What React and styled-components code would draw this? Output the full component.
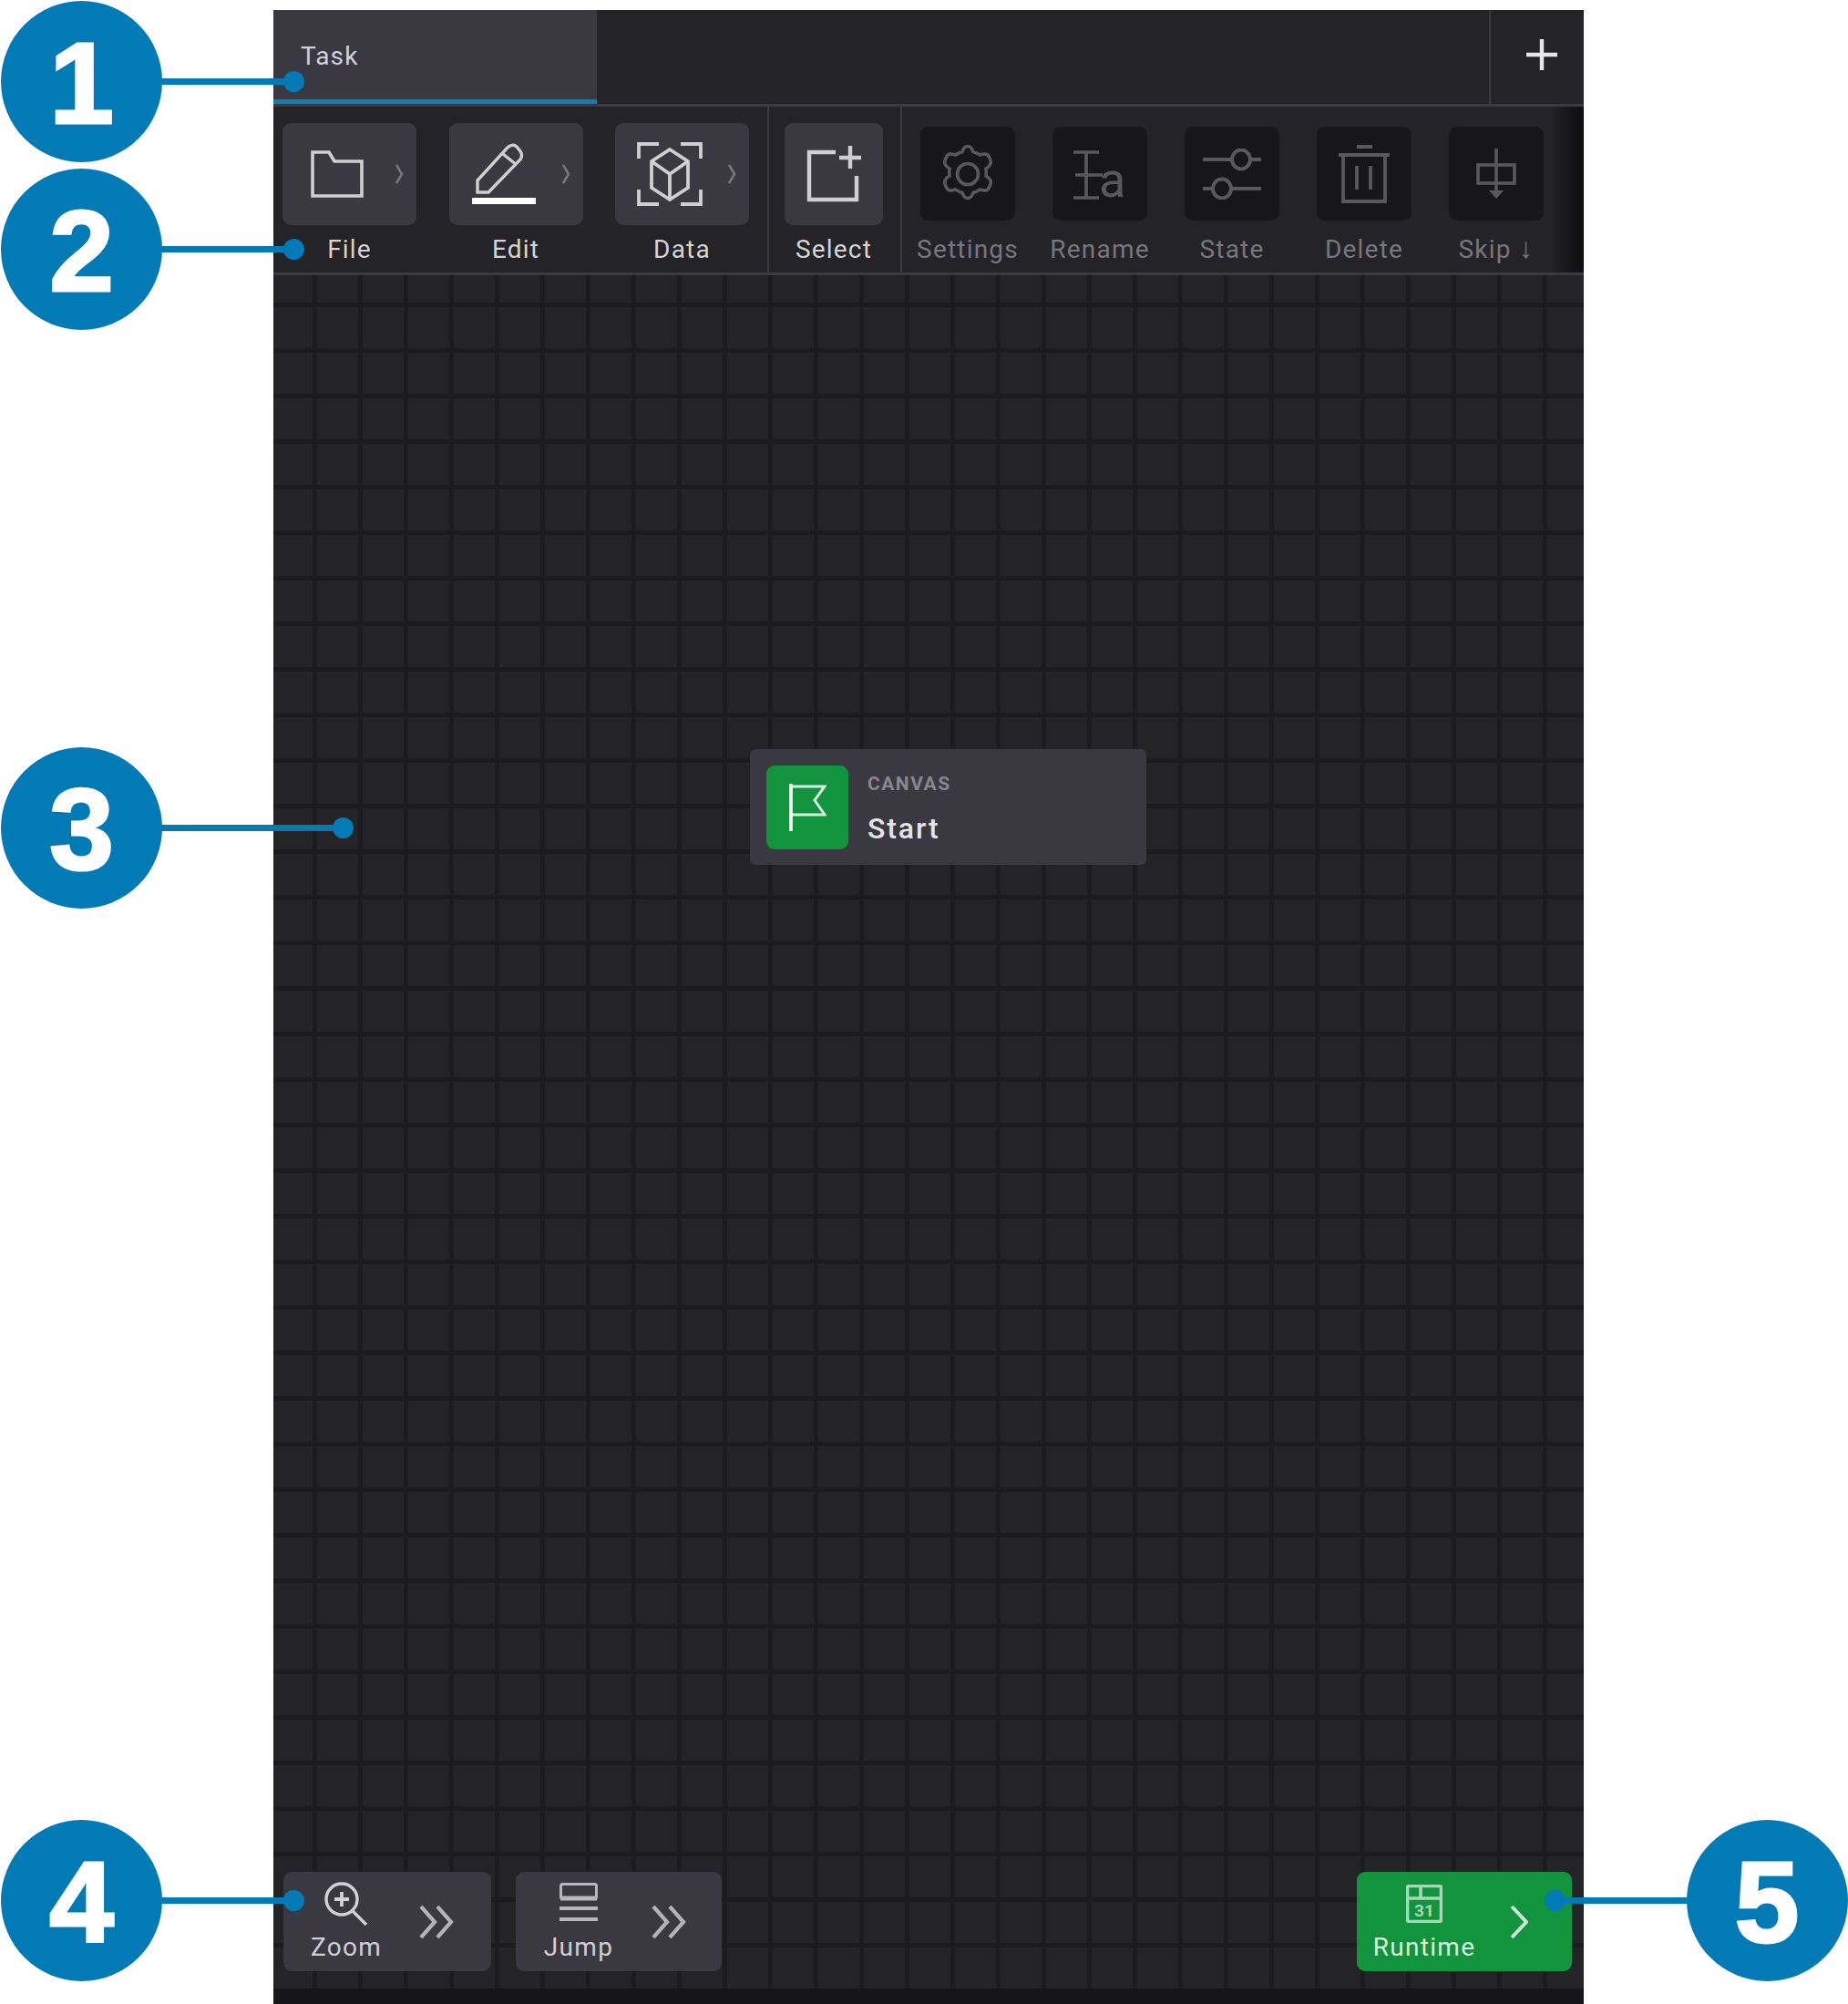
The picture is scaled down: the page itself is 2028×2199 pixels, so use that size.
import React from "react";
import styled, { createGlobalStyle } from "styled-components";

const Global = createGlobalStyle`
  html, body { margin: 0; padding: 0; background: #fff; }
  * { box-sizing: border-box; }
`;

const FONT = `Roboto, "Liberation Sans", sans-serif`;

const Page = styled.div`
  position: relative;
  width: 2028px;
  height: 2199px;
  padding: 11px 290px 0 300px;
  overflow: hidden;
  background: #fff;
  font-family: ${FONT};
`;
const Panel = styled.div`
  display: flex;
  flex-direction: column;
  height: 100%;
  background: #232328;
`;
const TabBar = styled.div`
  display: flex;
  height: 106px;
  flex: none;
  border-bottom: 3px solid #3a3a40;
`;
const Tab = styled.div`
  width: 355px;
  display: flex;
  align-items: flex-start;
  padding: 35px 0 0 30px;
  background: #3a3942;
  border-bottom: 5px solid #0f7fb3;
  color: #d2d2d6;
  font-size: 28px;
  letter-spacing: 1.1px;
  line-height: 32px;
`;
const TabFill = styled.div`
  flex: 1;
`;
const AddCell = styled.div`
  width: 104px;
  display: flex;
  align-items: center;
  justify-content: center;
  padding: 0 0 6px 10px;
  border-left: 2px solid #3a3a40;
`;
const Toolbar = styled.div`
  position: relative;
  display: flex;
  flex: none;
  height: 185px;
  border-bottom: 3px solid #3a3a40;
`;
const Group = styled.div`
  display: flex;
  width: ${(p) => p.$w};
  flex: ${(p) => (p.$w ? "none" : 1)};
  padding-left: ${(p) => p.$pad}px;
  gap: ${(p) => p.$gap || 0}px;
  border-right: ${(p) => (p.$w ? "2px solid #3a3a40" : "none")};
`;
const ToolItem = styled.div`
  display: flex;
  flex-direction: column;
  align-items: center;
  width: ${(p) => p.$w}px;
  padding-top: ${(p) => (p.$dim ? 22 : 18)}px;
`;
const ToolBtn = styled.div`
  display: flex;
  align-items: center;
  flex: none;
  width: 100%;
  height: ${(p) => (p.$dim ? 103 : 112)}px;
  border-radius: 9px;
  background: ${(p) => (p.$dim ? "#17171b" : "#3a3942")};
`;
const IconSlot = styled.div`
  display: flex;
  align-items: center;
  justify-content: center;
  flex: none;
  width: ${(p) => p.$w || "100%"};
`;
const ToolLabel = styled.div`
  margin-top: ${(p) => (p.$dim ? 16 : 11)}px;
  font-size: 28px;
  letter-spacing: 1.2px;
  line-height: 32px;
  white-space: nowrap;
  color: ${(p) => (p.$dim ? "#77777d" : "#d4d4d7")};
`;
const ArrowGlyph = styled.span`
  font-family: "Liberation Sans", sans-serif;
  font-weight: 700;
  font-size: 31px;
  line-height: 28px;
`;
const MoreChevron = styled.svg`
  margin-left: 4px;
  flex: none;
`;
const Fade = styled.div`
  position: absolute;
  right: 0;
  top: 0;
  bottom: 0;
  width: 36px;
  background: linear-gradient(to right, rgba(14, 14, 16, 0), #0e0e10);
`;
const Canvas = styled.div`
  position: relative;
  flex: 1;
  display: flex;
  align-items: flex-end;
  justify-content: space-between;
  padding: 0 13px 19px 11px;
  background-color: #232328;
  background-image: linear-gradient(to right, #1c1c1f 5px, transparent 5px),
    linear-gradient(to bottom, #1c1c1f 5px, transparent 5px);
  background-size: 50px 50px;
  background-position: 43px 0, 0 30px;
`;
const BottomStrip = styled.div`
  flex: none;
  height: 17px;
  background: #16161a;
`;
const Node = styled.div`
  position: absolute;
  left: 523px;
  top: 520px;
  width: 435px;
  height: 127px;
  display: flex;
  padding: 18px;
  gap: 21px;
  border-radius: 6px;
  background: #3a3942;
`;
const NodeIcon = styled.div`
  width: 90px;
  height: 92px;
  display: flex;
  align-items: center;
  justify-content: center;
  border-radius: 9px;
  background: #12933e;
`;
const NodeText = styled.div`
  display: flex;
  flex-direction: column;
`;
const NodeKind = styled.div`
  margin-top: 7px;
  font-size: 21px;
  line-height: 26px;
  font-weight: 700;
  letter-spacing: 1.5px;
  color: #87878d;
`;
const NodeName = styled.div`
  margin-top: 18px;
  font-size: 32px;
  line-height: 36px;
  font-weight: 500;
  letter-spacing: 1.9px;
  color: #e4e4e7;
`;
const BottomLeft = styled.div`
  display: flex;
  gap: 27px;
`;
const ActionBtn = styled.div`
  display: grid;
  grid-template-columns: ${(p) => p.$col}px 60px;
  align-items: center;
  width: ${(p) => p.$w}px;
  height: 109px;
  border-radius: 9px;
  background: ${(p) => (p.$green ? "#12933e" : "#3a3942")};
`;
const ActionMain = styled.div`
  display: flex;
  flex-direction: column;
  align-items: center;
  height: 100%;
  padding-top: 11px;
`;
const ActionIconBox = styled.div`
  display: flex;
  align-items: center;
  justify-content: center;
  height: 48px;
`;
const ActionLabel = styled.div`
  margin-top: 8px;
  font-size: 28px;
  letter-spacing: 1.3px;
  line-height: 32px;
  white-space: nowrap;
  color: ${(p) => (p.$green ? "#d6efdd" : "#cfcfd3")};
`;
const ActionArrow = styled.div`
  display: flex;
  justify-content: center;
`;

/* annotation overlays */
const Badge = styled.div`
  position: absolute;
  left: ${(p) => p.$cx - 88.5}px;
  top: ${(p) => p.$cy - 88.5}px;
  width: 177px;
  height: 177px;
  display: flex;
  align-items: center;
  justify-content: center;
  padding-top: 4px;
  border-radius: 50%;
  background: #017ab5;
  color: #fff;
  font-family: "Liberation Sans", Arial, sans-serif;
  font-weight: 700;
  font-size: 127px;
  line-height: 1;
  -webkit-text-stroke: 3px #fff;
`;
const Leader = styled.div`
  position: absolute;
  left: ${(p) => p.$x1}px;
  width: ${(p) => p.$x2 - p.$x1}px;
  top: ${(p) => p.$y - 3.5}px;
  height: 7px;
  background: #017ab5;
`;
const Dot = styled.div`
  position: absolute;
  left: ${(p) => p.$x - 11.5}px;
  top: ${(p) => p.$y - 11.5}px;
  width: 23px;
  height: 23px;
  border-radius: 50%;
  background: #017ab5;
`;

const Callout = ({ n, cy, dotX, right }) => (
  <>
    <Leader $x1={right ? dotX : 170} $x2={right ? 1860 : dotX} $y={cy} />
    <Dot $x={dotX} $y={cy} />
    <Badge $cx={right ? 1939 : 89.5} $cy={cy}>{n}</Badge>
  </>
);

/* icons */
const C = "#cfcfd2";
const D = "#58585d";

const Chevron = () => (
  <MoreChevron width="9" height="22" viewBox="0 0 9 22" fill="none" stroke="#77777c" strokeWidth="2.6">
    <path d="M1 1l6 10-6 10" />
  </MoreChevron>
);
const FolderIcon = () => (
  <svg width="58" height="52" viewBox="0 0 58 52" fill="none" stroke={C} strokeWidth="3.6">
    <path d="M2 50V2h18l6 10h30v38z" />
  </svg>
);
const PencilIcon = () => (
  <svg width="70" height="68" viewBox="0 0 70 68" fill="none" stroke={C} strokeWidth="3.4">
    <path d="M6 54V41L38 6c3-4 8-5 11-2l4 5c2 3 2 6 0 9L18 54z" />
    <path d="M34 12l15 12" />
    <path d="M0 63.500h70" stroke="#fff" strokeWidth="7" />
  </svg>
);
const CubeIcon = () => (
  <svg width="72" height="72" viewBox="0 0 72 72" fill="none" stroke={C} strokeWidth="3.8">
    <path d="M2 19V3h22M48 3h22v16M2 53v16h22M48 69h22V53" />
    <path d="M36 9l20 13v29L36 64 16 51V22z" />
    <path d="M16 22l20 14 20-14M36 36v28" />
  </svg>
);
const SelectIcon = () => (
  <svg width="60" height="62" viewBox="0 0 60 62" fill="none" stroke={C} strokeWidth="4.4">
    <path d="M32 7H3v52h52V33" />
    <path d="M48 0v25M36 13h24" />
  </svg>
);
const GearIcon = () => (
  <svg width="64" height="66" viewBox="0 0 64 64" fill="none" stroke={D} strokeWidth="3.6">
    <path d="M32 1.500c3 0 5 3 6 6 3 1 5 2 7.500 3.500 3-1 6-2 8.500 0 2 3 4 7 3 10-1 2-3 4-5 5 .5 3 .5 5 0 8 2 1 4 3 5 5 1 3-1 7-3 10-2.500 2-5.500 1-8.500 0-2.500 1.500-4.500 2.500-7.500 3.500-1 3-3 6-6 6s-5-3-6-6c-3-1-5-2-7.500-3.500-3 1-6 2-8.500 0-2-3-4-7-3-10 1-2 3-4 5-5-.5-3-.5-5 0-8-2-1-4-3-5-5-1-3 1-7 3-10 2.500-2 5.500-1 8.500 0 2.500-1.500 4.500-2.500 7.500-3.500 1-3 3-6 6-6z" />
    <circle cx="32" cy="32" r="11.500" />
  </svg>
);
const RenameIcon = () => (
  <svg width="64" height="76" viewBox="0 0 64 76" fill="none" stroke={D} strokeWidth="3.6">
    <path d="M3 14h28M3 64h28M17 14v50M5 39h30" />
    <text x="31" y="63" fontFamily="Roboto, sans-serif" fontSize="54" fill={D} stroke="none">a</text>
  </svg>
);
const SlidersIcon = () => (
  <svg width="64" height="56" viewBox="0 0 64 56" fill="none" stroke={D} strokeWidth="4">
    <path d="M0 12h32M52 12h12M0 44h11M31 44h33" />
    <ellipse cx="42" cy="12" rx="10" ry="10.500" />
    <ellipse cx="21" cy="44" rx="10" ry="10.500" />
  </svg>
);
const TrashIcon = () => (
  <svg width="56" height="64" viewBox="0 0 56 64" fill="none" stroke={D} strokeWidth="3.800">
    <path d="M20 2h17M0 11h56" />
    <path d="M5 11v51h46V11" />
    <path d="M20 23v26M35 23v26" />
  </svg>
);
const SkipIcon = () => (
  <svg width="44" height="56" viewBox="0 0 44 56" fill="none" stroke={D} strokeWidth="3.600">
    <path d="M22 0v46" />
    <rect x="2" y="18" width="40" height="20" />
    <path d="M14 46h16l-8 9z" fill={D} stroke="none" />
  </svg>
);
const PlusIcon = () => (
  <svg width="36" height="36" viewBox="0 0 36 36" fill="none" stroke="#e6e6e8" strokeWidth="4.400">
    <path d="M18 1v34M1 18h34" />
  </svg>
);
const FlagIcon = () => (
  <svg width="42" height="52" viewBox="0 0 42 52" fill="none" stroke="#d7eedd" strokeWidth="3">
    <path d="M3 52V3h37l-11 15 11 16H3" />
    <path d="M3 0v52" stroke="#fff" strokeWidth="3.400" />
  </svg>
);
const ZoomIcon = () => (
  <svg width="48" height="48" viewBox="0 0 48 48" fill="none" stroke="#d2d2d5" strokeWidth="3.400">
    <circle cx="19" cy="19" r="17" />
    <path d="M11 19h16M19 11v16" strokeWidth="3.800" />
    <path d="M31 32l15 15" />
  </svg>
);
const JumpIcon = () => (
  <svg width="42" height="46" viewBox="0 0 42 46" fill="none" stroke="#b8b8bc">
    <rect x="1.500" y="1.500" width="39" height="16" rx="2" strokeWidth="3" />
    <path d="M1 17h40" strokeWidth="5" />
    <path d="M0 28h42M0 40h42" strokeWidth="4" />
  </svg>
);
const CalendarIcon = () => (
  <svg width="40" height="42" viewBox="0 0 40 42" fill="none" stroke="#a7d7b6" strokeWidth="3.600">
    <rect x="1.500" y="1.500" width="37" height="39" rx="2" />
    <path d="M1 15h38M16 1v14" />
    <text x="20" y="35" textAnchor="middle" fontFamily="Roboto, sans-serif" fontWeight="700" fontSize="19" fill="#a7d7b6" stroke="none">31</text>
  </svg>
);
const DoubleChevron = () => (
  <svg width="38" height="36" viewBox="0 0 38 36" fill="none" stroke="#b4b4b8" strokeWidth="4.200">
    <path d="M2 1l15 17L2 35M20 1l15 17-15 17" />
  </svg>
);
const RightChevron = () => (
  <svg width="20" height="36" viewBox="0 0 20 36" fill="none" stroke="#cde9d6" strokeWidth="4">
    <path d="M2 1l16 17L2 35" />
  </svg>
);

const MenuTool = ({ label, icon }) => (
  <ToolItem $w={147}>
    <ToolBtn>
      <IconSlot $w="120px">{icon}</IconSlot>
      <Chevron />
    </ToolBtn>
    <ToolLabel>{label}</ToolLabel>
  </ToolItem>
);
const DimTool = ({ label, icon }) => (
  <ToolItem $w={104} $dim>
    <ToolBtn $dim>
      <IconSlot>{icon}</IconSlot>
    </ToolBtn>
    <ToolLabel $dim>{label}</ToolLabel>
  </ToolItem>
);
const Action = ({ w, col, label, icon, arrow, green }) => (
  <ActionBtn $w={w} $col={col} $green={green}>
    <ActionMain>
      <ActionIconBox>{icon}</ActionIconBox>
      <ActionLabel $green={green}>{label}</ActionLabel>
    </ActionMain>
    <ActionArrow>{arrow}</ActionArrow>
  </ActionBtn>
);

export default function App() {
  return (
    <Page>
      <Global />
      <Panel>
        <TabBar>
          <Tab>Task</Tab>
          <TabFill />
          <AddCell><PlusIcon /></AddCell>
        </TabBar>
        <Toolbar>
          <Group $w="544px" $pad={10} $gap={35.5}>
            <MenuTool label="File" icon={<FolderIcon />} />
            <MenuTool label="Edit" icon={<PencilIcon />} />
            <MenuTool label="Data" icon={<CubeIcon />} />
          </Group>
          <Group $w="146px" $pad={17}>
            <ToolItem $w={108}>
              <ToolBtn><IconSlot><SelectIcon /></IconSlot></ToolBtn>
              <ToolLabel>Select</ToolLabel>
            </ToolItem>
          </Group>
          <Group $pad={20} $gap={41}>
            <DimTool label="Settings" icon={<GearIcon />} />
            <DimTool label="Rename" icon={<RenameIcon />} />
            <DimTool label="State" icon={<SlidersIcon />} />
            <DimTool label="Delete" icon={<TrashIcon />} />
            <DimTool label={<>Skip <ArrowGlyph>↓</ArrowGlyph></>} icon={<SkipIcon />} />
          </Group>
          <Fade />
        </Toolbar>
        <Canvas>
          <Node>
            <NodeIcon><FlagIcon /></NodeIcon>
            <NodeText>
              <NodeKind>CANVAS</NodeKind>
              <NodeName>Start</NodeName>
            </NodeText>
          </Node>
          <BottomLeft>
            <Action w={228} col={138} label="Zoom" icon={<ZoomIcon />} arrow={<DoubleChevron />} />
            <Action w={226} col={138} label="Jump" icon={<JumpIcon />} arrow={<DoubleChevron />} />
          </BottomLeft>
          <Action w={236} col={148} green label="Runtime" icon={<CalendarIcon />} arrow={<RightChevron />} />
        </Canvas>
        <BottomStrip />
      </Panel>
      <Callout n="1" cy={89} dotX={322} />
      <Callout n="2" cy={273.5} dotX={322} />
      <Callout n="3" cy={908} dotX={376} />
      <Callout n="4" cy={2085} dotX={322} />
      <Callout n="5" cy={2085} dotX={1706} right />
    </Page>
  );
}
